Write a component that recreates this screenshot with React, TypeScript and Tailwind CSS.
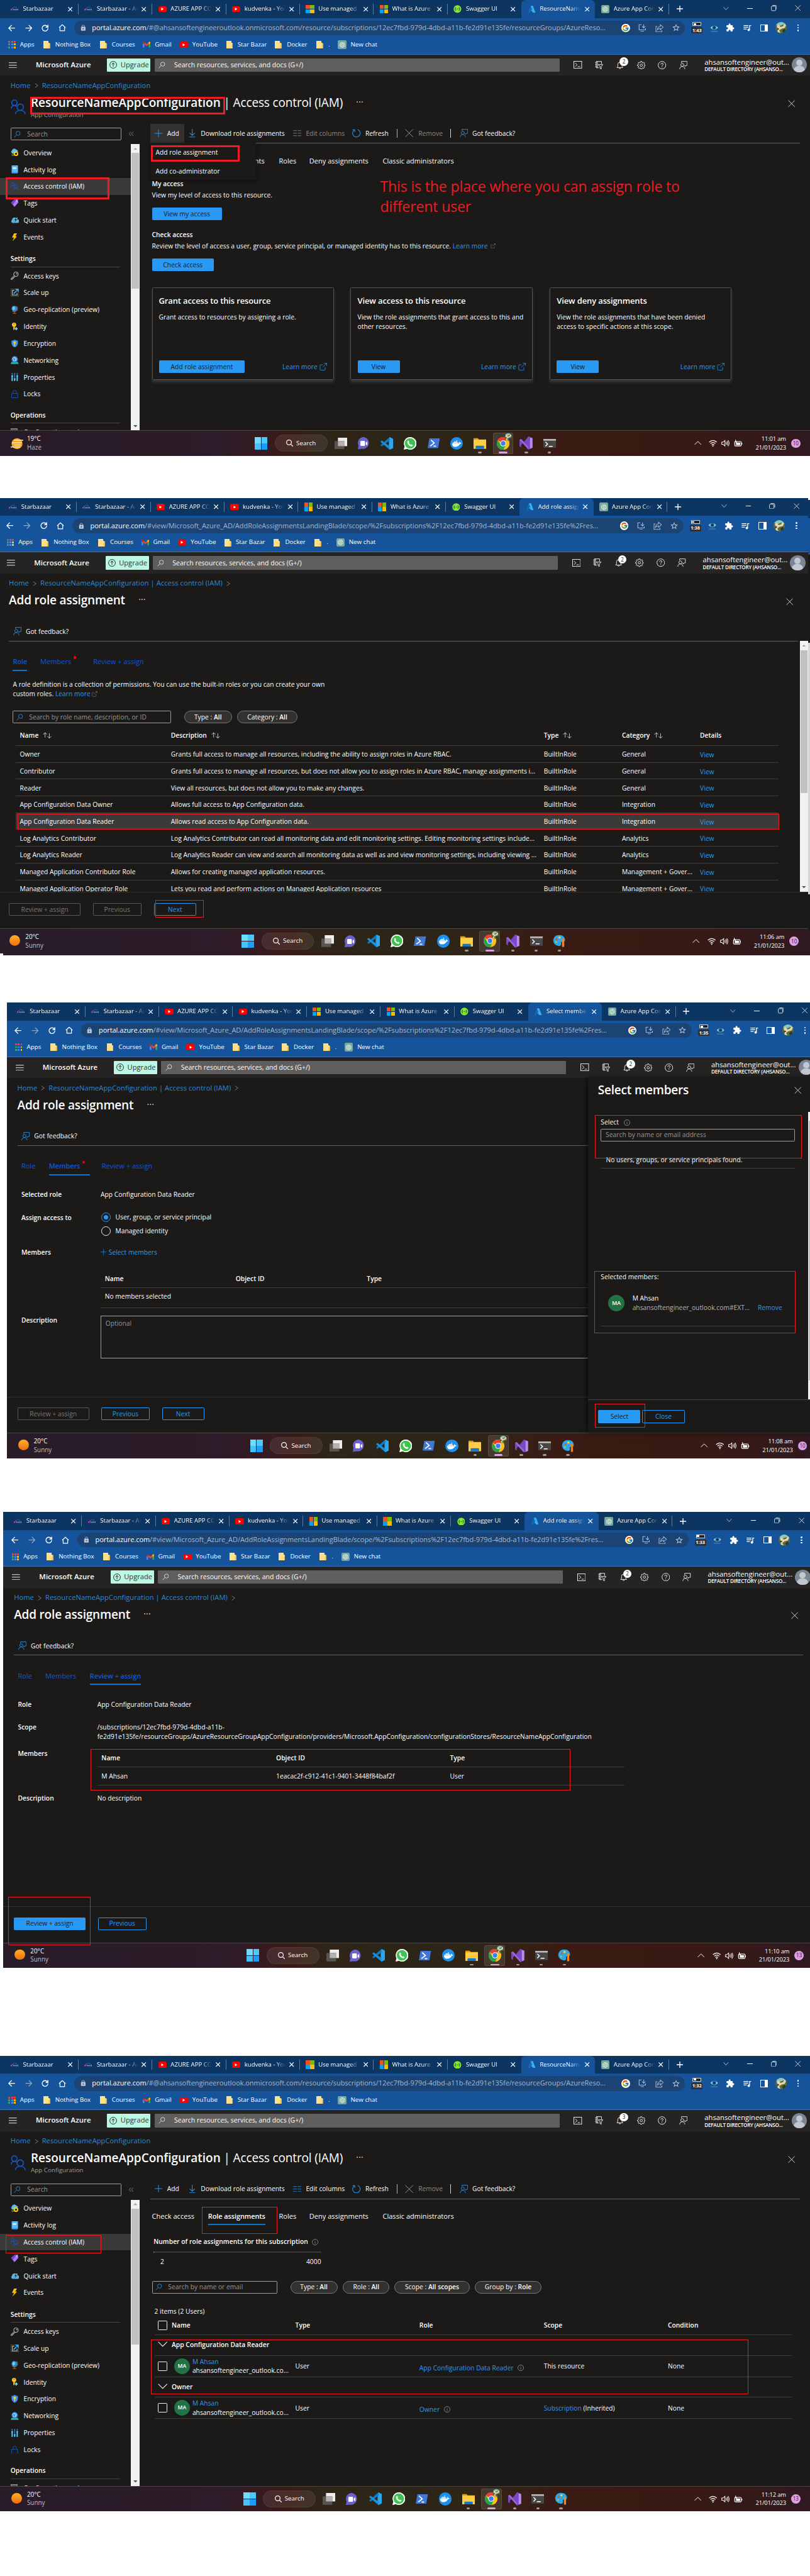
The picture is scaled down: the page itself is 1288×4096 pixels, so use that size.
import React from "react";
import {
  FaDocker,
} from "react-icons/fa";
import { FcGoogle } from "react-icons/fc";
import { MdExtension, MdLock, MdStarBorder, MdQueueMusic } from "react-icons/md";
import { RiOpenaiFill } from "react-icons/ri";

type Kids = { children?: React.ReactNode };

/* ---------- generic helpers ---------- */

function Svg({
  w = 20,
  h,
  vb = "0 0 20 20",
  c = "none",
  s = "none",
  sw = 1.3,
  children,
}: {
  w?: number;
  h?: number;
  vb?: string;
  c?: string;
  s?: string;
  sw?: number;
  children: React.ReactNode;
}) {
  return (
    <svg width={w} height={h ?? w} viewBox={vb} fill={c} stroke={s} strokeWidth={sw} className="block shrink-0">
      {children}
    </svg>
  );
}

const X = ({ w = 18, s = "#ffffff", sw = 1.4 }: { w?: number; s?: string; sw?: number }) => (
  <Svg w={w} s={s} sw={sw}>
    <path d="M1 1L19 19M19 1L1 19" />
  </Svg>
);

const Plus = ({ w = 20, s = "#2899f5", sw = 1.6 }: { w?: number; s?: string; sw?: number }) => (
  <Svg w={w} s={s} sw={sw}>
    <path d="M10 0V20M0 10H20" />
  </Svg>
);

const Lens = ({ w = 16, s = "#2899f5" }: { w?: number; s?: string }) => (
  <Svg w={w} s={s} sw={1.5}>
    <circle cx="12.5" cy="7.5" r="6" />
    <path d="M8 12L1 19.3" />
  </Svg>
);

const Feedback = ({ w = 20, s = "#2899f5" }: { w?: number; s?: string }) => (
  <Svg w={w} s={s} sw={1.3}>
    <path d="M5.5 4.5V1H19V10.5H16.5L13.6 13V10.5H12.6" />
    <circle cx="7.3" cy="9.2" r="3.6" />
    <path d="M1 19.5C1.3 15.6 3.8 13 7.3 13s6 2.600 6.300 6.500" />
  </Svg>
);

const People = ({ w = 20, sw = 1.3 }: { w?: number; sw?: number }) => (
  <Svg w={w} s="#0f5bd7" sw={sw} vb="0 0 19 19">
    <circle cx="4.600" cy="4.200" r="3.400" />
    <path d="M.6 11.500C.8 9 2.500 7.600 4.700 7.600c1.200 0 2.100.3 2.900.9" />
    <circle cx="12" cy="9.800" r="4" />
    <path d="M5.800 18.600C6.200 15.600 8.500 13.800 12 13.800s5.800 1.800 6.200 4.800" />
  </Svg>
);

const External = ({ w = 18, s = "#2899f5" }: { w?: number; s?: string }) => (
  <Svg w={w} s={s} sw={1.3}>
    <path d="M9 5H3Q1.500 5 1.500 6.500V17.500Q1.500 19 3 19H13.500Q15 19 15 17.500V11M12.500 1H19V7.500M19 1L8.500 11.500" />
  </Svg>
);

const Info = ({ w = 15 }: { w?: number }) => (
  <Svg w={w} s="#b5b3b1" sw={1.3}>
    <circle cx="10" cy="10" r="9" />
    <path d="M10 8.500V15M10 5V6.800" />
  </Svg>
);

const Sort = () => (
  <Svg w={21} h={16} s="#d8d6d4" sw={1.3} vb="0 0 21 16">
    <path d="M5.500 13V1.500M1 6L5.500 1.300L10 6M15.500 3V14.500M11 10L15.500 14.700L20 10" />
  </Svg>
);

/* ---------- favicons ---------- */

const StarFav = () => (
  <Svg w={20} h={12} vb="0 0 20 12">
    <path d="M5 5Q10-2 15 5" stroke="#3a5e96" strokeWidth="1.500" />
    <circle cx="1.800" cy="8" r="1.800" fill="#f236c8" />
    <circle cx="4" cy="5.500" r="1.300" fill="#8f3df0" />
    <path d="M6 8H19" stroke="#a9bbd6" strokeWidth="2.600" strokeDasharray="2 1.300" />
  </Svg>
);
const YtFav = () => (
  <div className="flex h-[14px] w-[20px] items-center justify-center rounded-[4px] bg-[#ff0000]">
    <Svg w={7} vb="0 0 10 10" c="#ffffff">
      <path d="M1 0L9 5L1 10Z" />
    </Svg>
  </div>
);
const MsFav = () => (
  <div className="grid grid-cols-2 gap-[1px]">
    <div className="size-[9.500px] bg-[#f25022]" />
    <div className="size-[9.500px] bg-[#7fba00]" />
    <div className="size-[9.500px] bg-[#00a4ef]" />
    <div className="size-[9.500px] bg-[#ffb900]" />
  </div>
);
const SwaggerFav = () => (
  <Svg w={19} s="#173647" sw={1.500}>
    <circle cx="10" cy="10" r="9.500" fill="#85ea2d" stroke="none" />
    <path d="M6.500 6Q5 6 5 8T3.800 10Q5 10 5 12T6.500 14M13.500 6Q15 6 15 8T16.200 10Q15 10 15 12T13.500 14" />
    <path d="M7 10H13" strokeDasharray="1.300 1.100" />
  </Svg>
);
const AzureFav = () => (
  <Svg w={20} vb="0 0 20 20">
    <path d="M7 2H12L6 18H1Z" fill="#1469b8" />
    <path d="M7.500 2H12.500L18.500 18H13L8 12.500L10.500 11Z" fill="#35b1f5" />
  </Svg>
);
const GptFav = () => (
  <div className="flex size-[20px] items-center justify-center rounded-[3px] bg-[#75a99b] text-[16px] text-white">
    <RiOpenaiFill />
  </div>
);
const Folder = () => (
  <Svg w={16} h={18} vb="0 0 16 18">
    <path d="M0 0H12V4L16 6V18H0Z" fill="#ffe08a" />
    <path d="M13 9L16 6V18H13Z" fill="#e9bd55" />
  </Svg>
);
const AppsGrid = () => (
  <div className="grid w-[17px] grid-cols-3 gap-[2px]">
    {["bg-[#ea4335]", "bg-[#ea4335]", "bg-[#ea4335]", "bg-[#34a853]", "bg-[#4285f4]", "bg-[#fbbc05]", "bg-[#34a853]", "bg-[#4285f4]", "bg-[#fbbc05]"].map((c, i) => (
      <div key={i} className={"size-[4.300px] " + c} />
    ))}
  </div>
);
const Gmail = () => (
  <Svg w={18} h={14} vb="0 0 18 14">
    <path d="M0 2V14H4V6Z" fill="#4285f4" />
    <path d="M18 2V14H14V6Z" fill="#34a853" />
    <path d="M0 1.500L2 .3L9 6L16 .3L18 1.500V4L9 10.800L0 4Z" fill="#ea4335" />
    <path d="M14 2L16 .3L18 1.500V4L14 7Z" fill="#fbbc05" />
    <path d="M0 1.500L2 .3L4 2V7L0 4Z" fill="#c5221f" />
  </Svg>
);
const Avatar = () => (
  <div className="size-[27px] overflow-hidden rounded-full">
    <Svg w={27} vb="0 0 27 27">
      <rect width="27" height="27" fill="#5b6b3d" />
      <path d="M0 0H27V9L19 6L11 9L0 7Z" fill="#8cc6c0" />
      <path d="M3 9L8 6L12 12L18 10L21 5L25 8L22 14L14 16L9 20L12 26L5 24L6 17Z" fill="#e6d6ad" />
      <path d="M2 18L7 14L9 18ZM16 20L22 16L26 22L18 26Z" fill="#2c3b22" />
    </Svg>
  </div>
);

/* ---------- browser chrome ---------- */

function Tab({ icon, title, active, sep = true }: { icon: React.ReactNode; title: string; active?: boolean; sep?: boolean }) {
  return (
    <div className={"flex h-[43px] w-[175px] shrink-0 items-center rounded-t-[10px] pl-[14.5px] " + (active ? "bg-[#15549a]" : "")}>
      <div className="flex w-[29.500px] shrink-0 items-center">{icon}</div>
      <div className="w-[100px] shrink-0 whitespace-nowrap [mask-image:linear-gradient(to_right,black_74%,transparent_97%)]">{title}</div>
      <div className="flex w-[24px] justify-center">
        <X w={11} sw={3.200} />
      </div>
      <div className={"ml-auto h-[25px] w-[1px] " + (sep && !active ? "bg-[#5f7a9c]" : "")} />
    </div>
  );
}

function Chrome({ activeTitle, host = "portal.azure.com", path, timer, fwd }: { activeTitle: string; host?: string; path: string; timer: string; fwd?: boolean }) {
  return (
    <div className="flex shrink-0 flex-col text-[14.300px] tracking-normal text-white">
      <div className="flex h-[43px] items-center bg-[#0d3561] pl-[10.500px]">
        <Tab icon={<StarFav />} title="Starbazaar" />
        <Tab icon={<StarFav />} title="Starbazaar - Ad" />
        <Tab icon={<YtFav />} title="AZURE APP CO" />
        <Tab icon={<YtFav />} title="kudvenka - You" />
        <Tab icon={<MsFav />} title="Use managed" />
        <Tab icon={<MsFav />} title="What is Azure" />
        <Tab icon={<SwaggerFav />} title="Swagger UI" sep={false} />
        <Tab icon={<AzureFav />} title={activeTitle} active />
        <Tab icon={<GptFav />} title="Azure App Con" />
        <div className="ml-[18px]">
          <Plus w={15} s="#fff" sw={2.700} />
        </div>
        <div className="mb-[4px] ml-auto flex items-center">
          <div className="flex w-[57px] justify-center">
            <Svg w={13} s="#fff" sw={1.500}><path d="M1 5L10 15L19 5" /></Svg>
          </div>
          <div className="flex w-[57px] justify-center"><div className="h-[1.500px] w-[13px] bg-white" /></div>
          <div className="flex w-[57px] justify-center">
            <Svg w={14} s="#fff" sw={1.700}>
              <rect x="1" y="4" width="15" height="15" rx="3" />
              <path d="M5 1.200H15Q19 1.200 19 5V15" />
            </Svg>
          </div>
          <div className="flex w-[57px] justify-center"><X w={14} sw={1.600} /></div>
        </div>
      </div>
      <div className="flex h-[49px] items-center bg-[#15549a] pb-[3px] pl-[7.500px]">
        <div className="flex w-[40px] justify-center">
          <Svg w={17} s="#fff" sw={2.200}><path d="M19 10H2M10 1.500L1.500 10L10 18.500" /></Svg>
        </div>
        <div className={"flex w-[40px] justify-center " + (fwd ? "" : "opacity-50")}>
          <Svg w={17} s="#fff" sw={2.200}><path d="M1 10H18M10 1.500L18.500 10L10 18.500" /></Svg>
        </div>
        <div className="flex w-[40px] justify-center">
          <Svg w={17} s="#fff" sw={2.300}><path d="M16.500 5.500A8 8 0 1 0 18 10M18 1V7.500H11.500" /></Svg>
        </div>
        <div className="flex w-[40px] justify-center">
          <Svg w={18} s="#fff" sw={2}><path d="M1.500 10L10 2L18.500 10M4 8.500V18H16V8.500" /></Svg>
        </div>
        <div className="ml-[8.500px] flex h-[35px] w-[1448px] items-center rounded-full bg-[#1b4474] pl-[13px]">
          <div className="w-[29px] text-[16px] text-[#b9c6d8]"><MdLock /></div>
          <div className="w-[1245px] whitespace-nowrap text-[16.400px] tracking-[-0.06px] text-[#a3b8d3]">
            <span className="text-white">{host}</span>
            {path}
          </div>
          <div className="flex w-[40px] justify-center">
            <div className="flex size-[20px] items-center justify-center rounded-full bg-white text-[17px]"><FcGoogle /></div>
          </div>
          <div className="flex w-[40px] justify-center">
            <Svg w={19} s="#a3b4cb" sw={1.800}><path d="M8 2H2V15H18V11M6 18.500H14M13.500 1V9.500M9.500 6L13.500 10L17.500 6" /></Svg>
          </div>
          <div className="flex w-[40px] justify-center">
            <Svg w={20} s="#a3b4cb" sw={1.600}><path d="M5 6H1.500V19H15.500V15M12 2L19 8L12 14V10.500Q8 10.500 5 14Q6 6.500 12 5.500Z" /></Svg>
          </div>
          <div className="flex w-[38px] justify-center text-[21px] text-[#b9c6d8]"><MdStarBorder /></div>
        </div>
        <div className="flex w-[56px] flex-col items-center">
          <div className="mb-[3px] flex h-[9px] w-[21px] items-center rounded-[1px] border-2 border-[#d5d5d5] bg-[#222] pl-[1px]"><div className="h-[4px] w-[6px] bg-white" /></div>
          <div className="flex h-[15px] w-[27px] items-center justify-center rounded-[2px] bg-[#2e3236] text-[11px] font-bold leading-none">{timer}</div>
        </div>
        <div className="flex w-[25px] justify-center">
          <Svg w={20} vb="0 0 20 20">
            <path d="M1 9Q10-1 19 9Q10 19 1 9Z" fill="#b5d3e0" />
            <circle cx="10" cy="9" r="4.800" fill="#1b6b8e" />
            <circle cx="10" cy="9" r="2" fill="#071a22" />
            <path d="M2 18H18" stroke="#5d8fbf" strokeWidth="1.500" />
          </Svg>
        </div>
        <div className="ml-[6px] flex w-[40px] justify-center text-[21px]"><MdExtension /></div>
        <div className="flex w-[40px] justify-center text-[24px]"><MdQueueMusic className="scale-x-[0.95]" /></div>
        <div className="flex w-[40px] justify-center"><div className="h-[17px] w-[19px] border-2 border-r-[8px] border-white" /></div>
        <div className="ml-[7px] flex w-[27px] justify-center"><Avatar /></div>
        <div className="ml-[25px] flex flex-col gap-[3px]">
          <div className="size-[3.500px] rounded-full bg-white" />
          <div className="size-[3.500px] rounded-full bg-white" />
          <div className="size-[3.500px] rounded-full bg-white" />
        </div>
      </div>
      <div className="flex h-[37px] items-center whitespace-nowrap border-b border-[#3f73b3] bg-[#15549a] pb-[8px] pl-[20px] text-[14.600px]">
        <div className="flex w-[83px] items-center gap-[10.500px]"><AppsGrid />Apps</div>
        <div className="flex w-[134px] items-center gap-[12px]"><Folder />Nothing Box</div>
        <div className="flex w-[102px] items-center gap-[12px]"><Folder />Courses</div>
        <div className="flex w-[87px] items-center gap-[10px]"><Gmail />Gmail</div>
        <div className="flex w-[110px] items-center gap-[10px]"><YtFav />YouTube</div>
        <div className="flex w-[116px] items-center gap-[11px]"><Folder />Star Bazar</div>
        <div className="flex w-[98px] items-center gap-[12px]"><Folder />Docker</div>
        <div className="flex w-[51px] items-center gap-[12px]"><Folder />.</div>
        <div className="flex items-center gap-[10px]"><GptFav />New chat</div>
      </div>
    </div>
  );
}

/* ---------- Azure top bar ---------- */

function TopBar({ count }: { count: string }) {
  return (
    <div className="flex h-[50px] shrink-0 items-center bg-[#252423] pl-[21px] text-white">
      <Svg w={19} h={14} s="#e8e8e8" sw={1.500} vb="0 0 19 14"><path d="M0 1H19M0 7H19M0 13H19" /></Svg>
      <div className="ml-[45px] w-[169px] whitespace-nowrap text-[17px] font-semibold">Microsoft Azure</div>
      <div className="flex h-[32px] w-[103px] items-center gap-[8px] rounded-[2px] bg-[#bbf7e2] pl-[6px] text-[16.600px] text-[#323130]">
        <Svg w={18} s="#1b1a19" sw={1.500}><circle cx="10" cy="10" r="9" /><path d="M10 15V5.500M6 9L10 5.200L14 9" /></Svg>
        Upgrade
      </div>
      <div className="ml-[9px] flex h-[32px] w-[960px] items-center gap-[21px] rounded-[2px] bg-[#605e5c] pl-[10px] text-[15.600px]">
        <Lens w={16} s="#f3f2f1" />
        Search resources, services, and docs (G+/)
      </div>
      <div className="ml-[19px] flex items-center">
        <div className="flex w-[50px] justify-center">
          <Svg w={20} h={18} s="#f3f2f1" sw={1.400} vb="0 0 20 18"><rect x=".7" y=".7" width="18.600" height="16.600" /><path d="M4 4.500L8.500 9L4 13.500M10 13.500H15.500" /></Svg>
        </div>
        <div className="flex w-[50px] justify-center">
          <Svg w={20} s="#f3f2f1" sw={1.400}><path d="M9 16H3V1H15.500V7M6 1V16M1 4H4M1 8.500H4M1 13H4M8 8.500H19L15 13V19L12 17V13Z" /></Svg>
        </div>
        <div className="relative flex w-[50px] justify-center">
          <Svg w={20} s="#f3f2f1" sw={1.400}><path d="M3 15.500H17L15 12.500V8A5 5 0 0 0 5 8V12.500ZM8 16Q8.500 18.500 10 18.500T12 16" /></Svg>
          <div className="absolute left-[24px] top-[-8px] flex size-[20px] items-center justify-center rounded-full bg-white text-[12px] leading-none text-[#1b1a19]">{count}</div>
        </div>
        <div className="flex w-[50px] justify-center">
          <Svg w={20} s="#f3f2f1" sw={1.400}>
            <circle cx="10" cy="10" r="2.800" />
            <path d="M8.600 1H11.400L12 3.600L13.700 4.400L16 3L18 5L16.500 7.200L17 8.600L19 9V11.400L16.800 12L16.200 13.500L17.500 15.500L15.500 17.700L13.300 16.400L11.900 17L11.400 19H8.600L8 16.800L6.600 16.300L4.500 17.600L2.500 15.600L3.800 13.400L3.200 12L1 11.400V9L3.200 8.300L3.800 6.800L2.500 4.800L4.500 2.600L6.600 4L8 3.400Z" />
          </Svg>
        </div>
        <div className="flex w-[50px] justify-center">
          <Svg w={20} s="#f3f2f1" sw={1.400}><circle cx="10" cy="10" r="9" /><path d="M7.300 8Q7.300 5.200 10 5.200T12.700 7.700Q12.700 9.200 11 10.200Q10 10.800 10 12.500M10 14V15.600" /></Svg>
        </div>
        <div className="flex w-[50px] justify-center"><Feedback s="#f3f2f1" /></div>
      </div>
      <div className="ml-[25px] w-[207px] whitespace-nowrap">
        <div className="text-[16.700px] leading-[20px]">ahsansoftengineer@out...</div>
        <div className="text-[12px] font-semibold leading-[15px] tracking-[-0.3px]">DEFAULT DIRECTORY (AHSANSO...</div>
      </div>
      <div className="size-[36px] shrink-0 overflow-hidden rounded-full bg-[#7b8594]">
        <Svg w={36} vb="0 0 36 36" c="#c3c8d0"><circle cx="18" cy="13" r="7.500" /><ellipse cx="18" cy="30" rx="13" ry="10" /></Svg>
      </div>
    </div>
  );
}

/* ---------- Windows task bar ---------- */

function App({ children, dot, active }: Kids & { dot?: boolean; active?: boolean }) {
  return (
    <div className="relative flex h-[50px] w-[55px] shrink-0 items-center justify-center">
      {active && <div className="absolute inset-x-[3px] inset-y-0 rounded-[5px] border border-white/10 bg-white/10" />}
      <div className="relative">{children}</div>
      {dot && <div className="absolute bottom-[1px] h-[4px] w-[8px] rounded-full bg-[#a39a97]" />}
      {active && <div className="absolute bottom-[1px] h-[4px] w-[20px] rounded-full bg-[#df9fe4]" />}
    </div>
  );
}

const ChromeLogo = () => (
  <Svg w={30} vb="-15 -15 30 30">
    <circle r="15" fill="#fbc116" />
    <path d="M0 0L-13 -7.500A15 15 0 0 1 13 -7.500L0 -6.500Z" fill="#ea3f33" />
    <path d="M-13 -7.500A15 15 0 0 0 1 14.950L6 3L-5 4Z" fill="#2ba24c" />
    <circle r="7" fill="#fff" />
    <circle r="5.500" fill="#3c7ef0" />
  </Svg>
);

function TaskBar({ temp, sky, haze, time, badge, paint }: { temp: string; sky: string; haze?: boolean; time: string; badge: string; paint?: boolean }) {
  return (
    <div className="flex h-[60px] shrink-0 items-center border-t border-[#484542] bg-[linear-gradient(90deg,#281c28_0%,#2d1c29_27%,#351b22_32%,#3b1c14_36%,#2f2418_39%,#2c2617_50%,#2f2517_58%,#3a1c14_68%,#391913_85%,#2f1920_100%)] text-white">
      <div className={"flex items-center pl-[25px] text-[14.700px] " + (paint ? "w-[576.500px]" : "w-[604px]")}>
        <div className="w-[39px]">
          {haze ? (
            <Svg w={30} h={28} vb="0 0 30 28">
              <circle cx="15" cy="14" r="13" fill="#f9a51a" />
              <path d="M8 6H30M3 12H26M8 17H24M0 22H22" stroke="#ffe9c4" strokeWidth="2.300" />
            </Svg>
          ) : (
            <div className="mb-[4px] ml-[2px] size-[25px] rounded-full bg-linear-to-b from-[#ffaf22] to-[#ee6c10]" />
          )}
        </div>
        <div className="leading-[20px]">
          <div>{temp}</div>
          <div className="text-[#c4bec2]">{sky}</div>
        </div>
      </div>
      <div className="grid w-[30px] grid-cols-2 gap-[1px]">
        <div className="h-[14.500px] bg-[#6fdcfc]" />
        <div className="h-[14.500px] bg-[#4bc8fb]" />
        <div className="h-[14.500px] bg-[#48c0fa]" />
        <div className="h-[14.500px] bg-[#1c9dfb]" />
      </div>
      <div className="ml-[17px] mr-[4px] flex h-[40px] w-[125px] items-center justify-center gap-[7px] rounded-full border border-white/5 bg-white/8 text-[14.600px]">
        <Svg w={17} s="#fff" sw={2.200}><circle cx="8" cy="8" r="6.800" /><path d="M13 13L19 19" /></Svg>
        Search
      </div>
      <App>
        <Svg w={30} h={28} vb="0 0 30 28">
          <rect x="8" width="22" height="20" fill="#ededeb" />
          <rect y="8" width="23" height="20" fill="#59544d" />
          <rect x="8" y="8" width="15" height="12" fill="#b3b2b0" />
        </Svg>
      </App>
      <App>
        <Svg w={29} vb="0 0 29 29">
          <path d="M15 0A14 14 0 1 1 9 27.500L0 29L1.500 20A14 14 0 0 1 15 0Z" fill="#6a63cf" />
          <rect x="6" y="9" width="11" height="12" rx="2" fill="#fff" />
          <path d="M19 13L22.500 10V20L19 17Z" fill="#fff" />
        </Svg>
      </App>
      <App>
        <Svg w={30} vb="0 0 30 30">
          <path d="M22 0L30 4V26L22 30L20 28V2Z" fill="#2aa7ee" />
          <path d="M22 0L0 19L3 22L22 8Z" fill="#0d7cc4" />
          <path d="M22 30L0 11L3 8L22 22Z" fill="#1b8fdc" />
        </Svg>
      </App>
      <App>
        <Svg w={30} vb="0 0 30 30">
          <path d="M15 0A15 15 0 1 1 8 28L0 30L2 22A15 15 0 0 1 15 0Z" fill="#fff" />
          <circle cx="15" cy="15" r="12.500" fill="#3ec351" />
          <path d="M9.500 9Q11 7 12.500 10T12 13.500Q13.500 17 17 18.500Q18 16.500 19 17.500T22 19.500Q20.500 22.500 17.500 22Q10 20 8.500 13Q8.300 10.500 9.500 9Z" fill="#fff" />
        </Svg>
      </App>
      <App>
        <Svg w={29} h={23} vb="0 0 29 23">
          <path d="M4 0H29L25 23H0Z" fill="#3f76d8" />
          <path d="M8 4L15.500 11L6 18.500M14 18.500H20" stroke="#fff" strokeWidth="2.600" />
        </Svg>
      </App>
      <App>
        <div className="flex size-[30px] items-center justify-center rounded-full bg-[#1d90ed] text-[22px] text-white"><FaDocker /></div>
      </App>
      <App dot>
        <Svg w={30} h={26} vb="0 0 30 26">
          <path d="M0 1H10L13 4H30V26H0Z" fill="#e2a00e" />
          <path d="M0 5H30V26H0Z" fill="#fdce45" />
          <path d="M5 26V21Q5 19 7 19H23Q25 19 25 21V26Z" fill="#1377c9" />
        </Svg>
      </App>
      <App active>
        <ChromeLogo />
        <div className="absolute right-[-6px] top-[-8px] scale-[0.65] [transform-origin:top_right]"><Avatar /></div>
      </App>
      <App dot>
        <Svg w={31} vb="0 0 31 31">
          <path d="M21 0L31 4V27L21 31Z" fill="#b98af0" />
          <path d="M21 0L14 9L4 20V26L0 23V8L4 6L21 24V31L25 29V2Z" fill="#7a48c4" />
          <path d="M0 8L4 6L21 24V31Z" fill="#9a63e0" />
        </Svg>
      </App>
      <App dot>
        <Svg w={30} h={22} vb="0 0 30 22">
          <rect width="30" height="22" rx="1" fill="#474747" />
          <rect width="30" height="4" fill="#b9b9b9" />
          <path d="M5 7L10 12L5 17M13 17.500H22" stroke="#fff" strokeWidth="2.200" />
        </Svg>
      </App>
      {paint && (
        <App dot>
          <Svg w={30} vb="0 0 30 30">
            <path d="M15 1Q29 1 29 14Q28 18 23 17Q18 17 20 22Q20 28 13 27Q1 24 1 13Q3 1 15 1Z" fill="#2fa8e8" />
            <circle cx="9" cy="11" r="2.600" fill="#f04a3c" />
            <circle cx="16" cy="7" r="2.600" fill="#fbd335" />
            <circle cx="8" cy="18" r="2.300" fill="#8ad446" />
            <path d="M23 9L27 12V29H22V13Z" fill="#e8892b" />
          </Svg>
        </App>
      )}
      <div className="ml-auto flex items-center pr-[23px]">
        <div className="mr-[18px]"><Svg w={17} s="#fff" sw={1.700}><path d="M1 14L10 5L19 14" /></Svg></div>
        <div className="mr-[10px]">
          <Svg w={20} s="#fff" sw={1.700}><path d="M1 7.500Q10-.5 19 7.500M4 11Q10 5.500 16 11M7 14.300Q10 11.500 13 14.300" /><circle cx="10" cy="16.800" r="1.500" fill="#fff" stroke="none" /></Svg>
        </div>
        <div className="mr-[10px]">
          <Svg w={20} s="#fff" sw={1.500}><path d="M1 7.500H4L8.500 3.500V16.500L4 12.500H1ZM11 7Q13 10 11 13M13.500 5Q17 10 13.500 15M16 3Q21 10 16 17" /></Svg>
        </div>
        <div className="mr-[21px]">
          <Svg w={20} s="#fff" sw={1.700}><path d="M4 2V7M1.500 7H6.500V10" /><rect x="2" y="6" width="15.500" height="10.500" rx="2" /><rect x="5" y="8.500" width="10" height="6" fill="#fff" stroke="none" /><path d="M19 9.500V13" /></Svg>
        </div>
        <div className="mr-[12px] w-[82px] whitespace-nowrap text-right text-[14px] leading-[20px] tracking-[-0.2px]">
          <div>{time}</div>
          <div>21/01/2023</div>
        </div>
        <div className="flex size-[22px] items-center justify-center rounded-full bg-[#df9fe4] text-[12px] leading-none text-[#2b1d2c]">{badge}</div>
      </div>
    </div>
  );
}

/* ---------- shared blade pieces ---------- */

const LINK = "text-[#2899f5]";

function Crumbs({ items, tail }: { items: string[]; tail?: boolean }) {
  return (
    <div className="flex h-[46px] shrink-0 items-center whitespace-nowrap pl-[25px] pt-[2px] text-[16.700px] text-[#2b88d8]">
      {items.map((t, i) => (
        <React.Fragment key={t}>
          {i > 0 && <Sep />}
          <span>{t}</span>
        </React.Fragment>
      ))}
      {tail && <Sep />}
    </div>
  );
}
const Sep = () => (
  <span className="mx-[9px]">
    <Svg w={9} h={12} s="#8a8886" sw={1.300} vb="0 0 9 12"><path d="M1 1L8 6L1 11" /></Svg>
  </span>
);

function Btn({ children, kind, className }: Kids & { kind: "fill" | "line" | "off"; className: string }) {
  const look =
    kind === "fill"
      ? "bg-[#2899f5] text-[#1b1a19] border-[#2899f5]"
      : kind === "line"
        ? "border-[#2899f5] text-[#2899f5] border-[1.500px]"
        : "border-[#5d5b59] text-[#797775]";
  return <div className={"flex h-[30px] shrink-0 items-center justify-center whitespace-nowrap rounded-[2px] border text-[15.300px] " + look + " " + className}>{children}</div>;
}

function Pill({ k, v, className }: { k: string; v: string; className: string }) {
  return (
    <div className={"flex h-[30px] shrink-0 items-center justify-center whitespace-pre rounded-full border border-[#797775] bg-[#323130] " + className}>
      {k} : <span className="font-semibold">{v}</span>
    </div>
  );
}

const Red = ({ className }: { className: string }) => <div className={"absolute border-[#ed1c24] " + className} />;

/* ---------- sidebar ---------- */

const menuIcons: Record<string, React.ReactNode> = {
  Overview: (
    <Svg w={19} vb="0 0 19 19">
      <path d="M4 12A4 4 0 0 1 3 5A5.500 5.500 0 0 1 13 3A4.500 4.500 0 0 1 17 8L10 12Z" fill="#5fc0e6" />
      <circle cx="12.500" cy="12.500" r="4" stroke="#ffc90f" strokeWidth="3" />
      <circle cx="5" cy="15.500" r="2" stroke="#5e9624" strokeWidth="1.600" />
    </Svg>
  ),
  "Activity log": (
    <Svg w={19} vb="0 0 19 19"><rect x="2" y="0" width="15" height="19" rx="1" fill="#329cf0" /><rect x="3.500" width="13.500" height="16" fill="#5fb8f5" /><rect x="5" y="5" width="8" height="3" fill="#fff" /></Svg>
  ),
  "Access control (IAM)": <People w={19} />,
  Tags: (
    <Svg w={19} vb="0 0 19 19"><path d="M1 8L10 0H17L18 8L9 18Z" fill="#a67af4" /><path d="M1 8L10 0H14L5 13Z" fill="#7a3fe0" /><circle cx="14.500" cy="4" r="1.200" fill="#fff" /></Svg>
  ),
  "Quick start": (
    <Svg w={20} h={15} vb="0 0 20 15"><path d="M4 14A4 4 0 0 1 3 7A6 6 0 0 1 12 2L16 1V6A4 4 0 0 1 17 14Z" fill="#5bb4dd" /><path d="M13 1L9 8H12L9 13L15 6H12Z" fill="#1b1a19" /></Svg>
  ),
  Events: (
    <Svg w={19} vb="0 0 19 19"><path d="M8 0H15L11 7H15L4 19L8 10H3Z" fill="#fdbb13" /></Svg>
  ),
  "Access keys": (
    <Svg w={19} s="#e8e6e4" sw={1.300} vb="0 0 19 19"><circle cx="12.500" cy="6" r="5.400" /><path d="M8.500 9.500L.7 16.500V18.300H4.200V15.800H6.500V13.500H8.800L10.500 11" /><circle cx="14" cy="4.800" r=".8" /></Svg>
  ),
  "Scale up": (
    <Svg w={19} vb="0 0 19 19"><rect x="1" y="1" width="17" height="17" stroke="#5e9624" strokeWidth="1.500" strokeDasharray="1.500 1" /><path d="M9 4H4V15H15V10" stroke="#a9a9a9" strokeWidth="2" /><path d="M7 12L14 5" stroke="#3ea2ee" strokeWidth="3" /><path d="M10 0H19V9Z" fill="#3ea2ee" /></Svg>
  ),
  "Geo-replication (preview)": (
    <Svg w={19} vb="0 0 19 19"><circle cx="8.500" cy="7" r="6.500" fill="#2b8fe0" /><path d="M5 3Q9 0 10 5T6 11Q3 8 5 3Z" fill="#5fd3f0" /><path d="M14 1Q19 8 13 13Q9 16 4 13M9 15V18M5 18.300H13" stroke="#c9691f" strokeWidth="1.500" /></Svg>
  ),
  Identity: (
    <Svg w={19} vb="0 0 19 19"><circle cx="8" cy="5" r="5" fill="#ffca1f" /><path d="M6 8H10V15L8 18L6 16Z" fill="#f4b312" /><circle cx="8" cy="3.200" r="1.200" fill="#6b4c00" /><path d="M13 10L17 14.500L13 18.500L10 14.500Z" fill="#6fd6ea" /></Svg>
  ),
  Encryption: (
    <Svg w={19} vb="0 0 19 19"><path d="M9.500 0Q13 2.500 17 2.500V9Q16.500 15 9.500 19Q2.500 15 2 9V2.500Q6 2.500 9.500 0Z" fill="#3b92ee" /><circle cx="9.500" cy="7" r="3" fill="#ffca1f" /><path d="M8.300 8H10.700V14L9.500 15.500L8.300 14Z" fill="#ffca1f" /></Svg>
  ),
  Networking: (
    <Svg w={19} vb="0 0 19 19"><path d="M2 14H17L19 19H0Z" fill="#2bb5a0" /><circle cx="9.500" cy="8" r="7.500" fill="#2d83da" /><path d="M5 5L9 3L14 6L12 11L7 12ZM9 3L12 11" stroke="#d9efff" strokeWidth="1.300" /></Svg>
  ),
  Properties: (
    <Svg w={19} vb="0 0 19 19"><path d="M3.500 0V19M9.500 0V19M15.500 0V19" stroke="#1b7fd6" strokeWidth="2.400" /><path d="M3.500 7V19M9.500 14V19M15.500 7V19" stroke="#48dcf5" strokeWidth="2.600" /><path d="M1.500 7H5.500M7.500 14H11.500M13.500 7H17.500" stroke="#9fe9f8" strokeWidth="1.500" /></Svg>
  ),
  Locks: (
    <Svg w={19} s="#0f5bd7" sw={1.300} vb="0 0 19 19"><rect x="2.500" y="8.500" width="14" height="10" /><path d="M5.500 8.500V5Q5.500 .8 9.500 .8T13.500 5V8.500" /></Svg>
  ),
};

function MenuItem({ name }: { name: string }) {
  return (
    <div className={"flex h-[40px] shrink-0 items-center whitespace-nowrap pl-[25px] " + (name === "Access control (IAM)" ? "bg-[#3b3a39]" : "")}>
      <div className="flex w-[31px] shrink-0">{menuIcons[name]}</div>
      <div className="pt-[1px]">{name}</div>
    </div>
  );
}

function Sidebar() {
  return (
    <div className="flex w-[331px] shrink-0 flex-col">
      <div className="flex h-[51px] shrink-0 items-start pl-[25px] pt-[12px]">
        <div className="flex h-[30px] w-[263px] items-center gap-[15px] rounded-[2px] border border-[#a19f9d] pl-[7px] text-[#979593]">
          <Lens />
          Search
        </div>
        <div className="ml-[18px] pt-[9px]"><Svg w={11} s="#a19f9d" sw={2}><path d="M9 1L1 10L9 19M19 1L11 10L19 19" /></Svg></div>
      </div>
      <div className="flex h-[678px]">
        <div className="flex w-[310px] flex-col overflow-hidden">
          {["Overview", "Activity log", "Access control (IAM)", "Tags", "Quick start", "Events"].map((n) => <MenuItem key={n} name={n} />)}
          <div className="mx-[25px] flex h-[51px] shrink-0 items-end border-b border-[#484644] pb-[7px] font-semibold">Settings</div>
          <div className="h-[1px] shrink-0" />
          {["Access keys", "Scale up", "Geo-replication (preview)", "Identity", "Encryption", "Networking", "Properties", "Locks"].map((n) => <MenuItem key={n} name={n} />)}
          <div className="mx-[25px] flex h-[50px] shrink-0 items-end border-b border-[#484644] pb-[7px] font-semibold">Operations</div>
          <div className="flex h-[40px] shrink-0 items-center pl-[25px] pt-[3px]">
            <div className="w-[31px]"><div className="h-[19px] w-[16px] border border-[#8a8886] bg-[#605e5c]" /></div>
            Configuration explorer
          </div>
        </div>
        <div className="flex w-[21px] flex-col items-center bg-[#f1f1f1]">
          <div className="flex h-[21px] items-center"><Svg w={10} h={5} vb="0 0 10 5" c="#a3a3a3"><path d="M5 0L10 5H0Z" /></Svg></div>
          <div className="h-[322px] w-[17px] bg-[#c1c1c1]" />
          <div className="mt-auto flex h-[21px] items-center"><Svg w={10} h={5} vb="0 0 10 5" c="#505050"><path d="M0 0H10L5 5Z" /></Svg></div>
        </div>
      </div>
    </div>
  );
}

/* ---------- access control blade ---------- */

function IamBlade({ children, menuOpen }: Kids & { menuOpen?: boolean }) {
  return (
    <div className="flex h-[841px] flex-col">
      <Crumbs items={["Home", "ResourceNameAppConfiguration"]} />
      <div className="flex h-[66px] shrink-0 pl-[25px]">
        <div className="w-[48px] pt-[11px]"><People w={36} sw={1.200} /></div>
        <div className="whitespace-nowrap">
          <div className="flex h-[36px] items-center text-[28.400px] tracking-[-0.25px]">
            <span className="font-semibold tracking-[-0.05px]">ResourceNameAppConfiguration</span>
            <span className="whitespace-pre"> | Access control (IAM)</span>
            <span className="ml-[32px] text-[18px] tracking-[1px]">···</span>
          </div>
          <div className="flex h-[24px] items-center text-[14.600px] text-[#a19f9d]">App Configuration</div>
        </div>
        <div className="ml-auto mr-[36px] pt-[12px]"><X w={17} s="#e8e8e8" sw={1.500} /></div>
      </div>
      <div className="flex h-[729px]">
        <Sidebar />
        <div className="relative ml-[25px] flex w-[1540px] flex-col">
          <div className="flex h-[49px] shrink-0 items-end whitespace-nowrap border-b border-[#605e5c]">
            <div className={"flex h-[45px] w-[80px] items-center pl-[11px] " + (menuOpen ? "bg-[#323130]" : "")}>
              <div className="w-[29px]"><Plus w={18} /></div>Add
            </div>
            <div className="flex h-[45px] w-[258px] items-center pl-[13px]">
              <div className="w-[27px]"><Svg w={14} h={20} s="#2899f5" sw={1.500} vb="0 0 14 20"><path d="M7 0V15M1 9.500L7 15.500L13 9.500M0 19H14" /></Svg></div>
              Download role assignments
            </div>
            <div className={"flex h-[45px] w-[141px] items-center " + (menuOpen ? "text-[#8a8886]" : "")}>
              <div className="w-[31px]"><Svg w={20} h={14} s={menuOpen ? "#797775" : "#2b7ac9"} sw={1.500} vb="0 0 20 14"><path d="M0 1H9M11 1H20M0 7H9M11 7H20M0 13H9M11 13H20" /></Svg></div>
              Edit columns
            </div>
            <div className="flex h-[45px] w-[105px] items-center">
              <div className="w-[31px]"><Svg w={20} s="#2899f5" sw={1.500}><path d="M5 2.500A9 9 0 1 0 13 1.500M1 2H6V7" /></Svg></div>
              Refresh
            </div>
            <div className="mb-[12px] h-[21px] w-[1.500px] bg-[#b5b3b1]" />
            <div className="flex h-[45px] w-[126.500px] items-center pl-[19px] text-[#8a8886]">
              <div className="w-[31px]"><X w={20} s="#a19f9d" /></div>Remove
            </div>
            <div className="mb-[12px] h-[21px] w-[1.500px] bg-[#d8d6d4]" />
            <div className="flex h-[45px] items-center pl-[20px]">
              <div className="w-[30px]"><Feedback /></div>Got feedback?
            </div>
          </div>
          <div className="flex h-[84px] shrink-0 items-center whitespace-nowrap pl-[4px] text-[16.400px]">
            <div className="w-[133px]">Check access</div>
            <div className="flex w-[168px]">
              <div className={menuOpen ? "" : "border-b-[3px] border-[#0078d4] pb-[6px] pt-[9px] font-semibold tracking-[-0.15px]"}>Role assignments</div>
            </div>
            <div className="w-[72px]">Roles</div>
            <div className="w-[174px]">Deny assignments</div>
            <div>Classic administrators</div>
          </div>
          {children}
        </div>
      </div>
    </div>
  );
}

function Card({ title, text, btn, btnW, className }: { title: string; text: string; btn: string; btnW: string; className: string }) {
  return (
    <div className={"flex h-[219px] w-[431px] flex-col rounded-[2px] border border-[#55534f] px-[15px] pb-[15px] pt-[17px] shadow-[0_5px_7px_rgba(255,255,255,0.13)] " + className}>
      <div className="h-[26px] text-[19.400px] font-semibold leading-[26px] tracking-[-0.2px]">{title}</div>
      <div className="mt-[15px]">{text}</div>
      <div className="mt-auto flex items-center justify-between">
        <Btn kind="fill" className={btnW}>{btn}</Btn>
        <div className={"flex items-center gap-[4px] " + LINK}>Learn more <External /></div>
      </div>
    </div>
  );
}

function AccessOverview() {
  return (
    <>
      <div className="flex flex-col pl-[4px]">
        <div className="h-[24px] font-semibold leading-[24px]">My access</div>
        <div className="flex h-[29px] items-center">View my level of access to this resource.</div>
        <Btn kind="fill" className="mt-[15px] w-[166px]">View my access</Btn>
        <div className="mt-[22px] h-[24px] font-semibold leading-[24px]">Check access</div>
        <div className="flex h-[30px] items-center whitespace-pre">
          Review the level of access a user, group, service principal, or managed identity has to this resource. <span className={LINK}>Learn more</span>
          <span className="ml-[6px]"><External w={12} s="#8a8886" /></span>
        </div>
        <Btn kind="fill" className="mt-[15px] w-[147px]">Check access</Btn>
        <div className="mt-[39px] flex">
          <Card title="Grant access to this resource" text="Grant access to resources by assigning a role." btn="Add role assignment" btnW="w-[204px]" className="mr-[40px]" />
          <Card title="View access to this resource" text="View the role assignments that grant access to this and other resources." btn="View" btnW="w-[100px]" className="mr-[41px]" />
          <Card title="View deny assignments" text="View the role assignments that have been denied access to specific actions at this scope." btn="View" btnW="w-[100px]" className="" />
        </div>
      </div>
      <div className="absolute left-0 top-[48px] flex h-[88px] w-[250px] flex-col whitespace-nowrap bg-[#1b1a19] pl-[13px] shadow-[0_3px_8px_rgba(0,0,0,0.5)]">
        <div className="flex h-[46px] items-center">Add role assignment</div>
        <div className="flex h-[42px] items-center">Add co-administrator</div>
      </div>
      <div className="absolute left-[545px] top-[126px] w-[760px] text-[34.500px] leading-[48.500px] tracking-[-0.25px] text-[#ed1c24]">
        This is the place where you can assign role to different user
      </div>
    </>
  );
}

const Box = () => <div className="size-[22px] rounded-[2px] border-[1.500px] border-[#f3f2f1]" />;
const Down = () => <Svg w={23} h={13} s="#f3f2f1" sw={1.500} vb="0 0 23 13"><path d="M1 1L11.500 11.500L22 1" /></Svg>;
const Face = ({ className }: { className: string }) => (
  <div className={"flex shrink-0 items-center justify-center rounded-full bg-[#217346] text-[13px] font-semibold text-white " + className}>MA</div>
);

function Assignment({ role, scope }: { role: string; scope: React.ReactNode }) {
  return (
    <div className="flex h-[50px] items-center border-b border-[#3f3d3c] pl-[8px]">
      <div className="w-[39px]"><Box /></div>
      <div className="w-[43px]"><Face className="size-[37px]" /></div>
      <div className="w-[244px]">
        <div className={LINK}>M Ahsan</div>
        <div>ahsansoftengineer_outlook.co...</div>
      </div>
      <div className="w-[294px] pt-[1px]">User</div>
      <div className={"flex w-[295px] items-center gap-[10px] pt-[8px] " + LINK}>{role}<Info /></div>
      <div className="w-[294px] pt-[1px]">{scope}</div>
      <div className="pt-[1px]">None</div>
    </div>
  );
}

function RoleAssignments() {
  return (
    <div className="flex flex-col whitespace-nowrap">
      <div className="flex h-[33px] items-center gap-[9px] pl-[8px] pt-[2px] font-semibold tracking-[0.09px]">
        Number of role assignments for this subscription <Info />
      </div>
      <div className="ml-[7px] mt-[7px] flex h-[3px] w-[398px] bg-[#3b3a39]"><div className="w-[1.500px] bg-[#2899f5]" /></div>
      <div className="ml-[24px] flex h-[41px] w-[381px] items-center justify-between pt-[2px]"><span>2</span><span>4000</span></div>
      <div className="ml-[4px] mt-[26px] flex">
        <div className="flex h-[30px] w-[297px] items-center gap-[14px] rounded-[2px] border border-[#a19f9d] pl-[7px] text-[#979593]"><Lens />Search by name or email</div>
        <Pill k="Type" v="All" className="ml-[31px] w-[112px]" />
        <Pill k="Role" v="All" className="ml-[13px] w-[110px]" />
        <Pill k="Scope" v="All scopes" className="ml-[12px] w-[178px]" />
        <Pill k="Group by" v="Role" className="ml-[12px] w-[159px]" />
      </div>
      <div className="mt-[31px] h-[24px] pl-[10px]">2 items (2 Users)</div>
      <div className="ml-[10px] w-[1510px]">
        <div className="flex h-[43px] items-center border-b border-[#3f3d3c] pb-[1px] pl-[8px] font-semibold">
          <div className="w-[33px]"><Box /></div>
          <div className="w-[293px]">Name</div>
          <div className="w-[294px]">Type</div>
          <div className="w-[295px]">Role</div>
          <div className="w-[294px]">Scope</div>
          <div>Condition</div>
        </div>
        <div className="flex h-[50px] items-center border-b border-[#3f3d3c] pb-[3px] pl-[8px] font-semibold"><div className="w-[33px]"><Down /></div><div className="pt-[2px]">App Configuration Data Reader</div></div>
        <Assignment role="App Configuration Data Reader" scope="This resource" />
        <div className="flex h-[49px] items-center border-b border-[#3f3d3c] pb-[3px] pl-[8px] font-semibold"><div className="w-[33px]"><Down /></div><div className="pt-[2px]">Owner</div></div>
        <Assignment role="Owner" scope={<><span className={LINK}>Subscription</span> (Inherited)</>} />
      </div>
    </div>
  );
}

/* ---------- add role assignment blade ---------- */

type Step = { name: string; width: string; dot?: boolean };

function Wizard({ steps, active, children, footer, close = true }: Kids & { steps: Step[]; active: string; footer: React.ReactNode; close?: boolean }) {
  return (
    <div className="flex h-[841px] flex-col whitespace-nowrap">
      <Crumbs items={["Home", "ResourceNameAppConfiguration | Access control (IAM)"]} tail />
      <div className="flex h-[66px] shrink-0 pl-[25px]">
        <div className="flex h-[36px] items-center text-[28.400px] font-semibold tracking-[-0.3px]">
          Add role assignment
          <span className="ml-[32px] text-[18px] font-normal tracking-[1px]">···</span>
        </div>
        {close && <div className="ml-auto mr-[36px] pt-[12px]"><X w={17} s="#e8e8e8" sw={1.500} /></div>}
      </div>
      <div className="ml-[25px] mr-[25px] flex h-[49px] shrink-0 items-center gap-[10px] border-b border-[#605e5c] pl-[10px] pt-[4px]">
        <Feedback />
        Got feedback?
      </div>
      <div className="flex h-[594px] shrink-0 flex-col overflow-hidden">
        <div className="flex h-[70px] shrink-0 pl-[34.500px] text-[16.400px] text-[#0f57d8]">
          {steps.map((s) => (
            <div key={s.name} className={"flex shrink-0 " + s.width}>
              <div className={"flex items-end border-b-[3px] pb-[7px] leading-[24px] " + (s.name === active ? "border-[#0078d4] font-semibold tracking-[-0.15px]" : "border-transparent")}>
                {s.name}
                {s.dot && <div className="mb-[18px] ml-[5px] mr-[12px] size-[7px] rounded-full bg-[#ff0000]" />}
              </div>
            </div>
          ))}
        </div>
        {children}
      </div>
      <div className="flex h-[86px] shrink-0 items-start border-t border-[#323130] pl-[25px] pt-[25px]">{footer}</div>
    </div>
  );
}

const ROLES: string[][] = [
  ["Owner", "Grants full access to manage all resources, including the ability to assign roles in Azure RBAC.", "General"],
  ["Contributor", "Grants full access to manage all resources, but does not allow you to assign roles in Azure RBAC, manage assignments i...", "General"],
  ["Reader", "View all resources, but does not allow you to make any changes.", "General"],
  ["App Configuration Data Owner", "Allows full access to App Configuration data.", "Integration"],
  ["App Configuration Data Reader", "Allows read access to App Configuration data.", "Integration"],
  ["Log Analytics Contributor", "Log Analytics Contributor can read all monitoring data and edit monitoring settings. Editing monitoring settings include...", "Analytics"],
  ["Log Analytics Reader", "Log Analytics Reader can view and search all monitoring data as well as and view monitoring settings, including viewing ...", "Analytics"],
  ["Managed Application Contributor Role", "Allows for creating managed application resources.", "Management + Gover..."],
  ["Managed Application Operator Role", "Lets you read and perform actions on Managed Application resources", "Management + Gover..."],
];

function RoleStep() {
  return (
    <Wizard
      active="Role"
      steps={[
        { name: "Role", width: "w-[65px]" },
        { name: "Members", width: "w-[125.500px]", dot: true },
        { name: "Review + assign", width: "w-[140px]" },
      ]}
      footer={
        <>
          <Btn kind="off" className="w-[170px]">Review + assign</Btn>
          <Btn kind="off" className="ml-[29px] w-[115px]">Previous</Btn>
          <Btn kind="line" className="ml-[30px] w-[100px]">Next</Btn>
        </>
      }
    >
      <div className="mt-[22px] pl-[34.500px]">
        A role definition is a collection of permissions. You can use the built-in roles or you can create your own
        <div className="flex items-center whitespace-pre">custom roles. <span className={LINK}>Learn more</span><span className="ml-[4px]"><External w={13} s="#8a8886" /></span></div>
      </div>
      <div className="mt-[29px] flex shrink-0 pl-[34.500px]">
        <div className="flex h-[30px] w-[375px] items-center gap-[14px] rounded-[2px] border border-[#a19f9d] pl-[7px] text-[#979593]"><Lens />Search by role name, description, or ID</div>
        <Pill k="Type" v="All" className="ml-[31px] w-[113px]" />
        <Pill k="Category" v="All" className="ml-[12px] w-[144px]" />
      </div>
      <div className="ml-[41px] w-[1808px] shrink-0">
        <div className="flex h-[53px] items-center border-b border-[#3f3d3c] pl-[10px] pt-[6px] font-semibold">
          <div className="flex w-[358px] items-center gap-[10px]">Name <Sort /></div>
          <div className="flex w-[884px] items-center gap-[10px]">Description <Sort /></div>
          <div className="flex w-[185px] items-center gap-[10px]">Type <Sort /></div>
          <div className="flex w-[185px] items-center gap-[10px]">Category <Sort /></div>
          <div>Details</div>
        </div>
        {ROLES.map((r) => (
          <div key={r[0]} className={"flex h-[39.800px] items-center border-b border-[#3f3d3c] pl-[10px] pt-[2px] " + (r[0] === "App Configuration Data Reader" ? "bg-[#3b3a39]" : "")}>
            <div className="w-[358px]">{r[0]}</div>
            <div className="w-[884px]">{r[1]}</div>
            <div className="w-[185px]">BuiltInRole</div>
            <div className="w-[185px]">{r[2]}</div>
            <div className={"pt-[2px] " + LINK}>View</div>
          </div>
        ))}
      </div>
    </Wizard>
  );
}

const Label = ({ children }: Kids) => <div className="w-[188px] shrink-0 font-semibold">{children}</div>;

function MembersStep() {
  return (
    <Wizard
      active="Members"
      close={false}
      steps={[
        { name: "Role", width: "w-[65.500px]" },
        { name: "Members", width: "w-[125px]", dot: true },
        { name: "Review + assign", width: "w-[140px]" },
      ]}
      footer={
        <>
          <Btn kind="off" className="w-[170px]">Review + assign</Btn>
          <Btn kind="line" className="ml-[29px] w-[115px]">Previous</Btn>
          <Btn kind="line" className="ml-[29px] w-[100px]">Next</Btn>
        </>
      }
    >
      <div className="flex flex-col pl-[34.500px]">
        <div className="mt-[35px] flex h-[22px] items-center"><Label>Selected role</Label>App Configuration Data Reader</div>
        <div className="mt-[28px] flex">
          <div className="pt-[4px]"><Label>Assign access to</Label></div>
          <div>
            <div className="flex h-[28px] items-center gap-[11px]">
              <div className="ml-[2px] flex size-[22px] items-center justify-center rounded-full border-[1.500px] border-[#2899f5]"><div className="size-[10px] rounded-full bg-[#2899f5]" /></div>
              User, group, or service principal
            </div>
            <div className="mt-[5px] flex h-[28px] items-center gap-[11px]">
              <div className="ml-[2px] size-[22px] rounded-full border-[1.500px] border-[#f3f2f1]" />
              Managed identity
            </div>
          </div>
        </div>
        <div className="mt-[25px] flex h-[22px] items-center">
          <Label>Members</Label>
          <div className={"flex items-center gap-[5px] " + LINK}><Plus w={14} sw={1.500} />Select members</div>
        </div>
        <div className="ml-[188px] mt-[31px]">
          <div className="flex h-[43px] items-center border-b border-[#3f3d3c] pl-[10px] pt-[2px] font-semibold"><div className="w-[310px]">Name</div><div className="w-[311px]">Object ID</div><div>Type</div></div>
          <div className="flex h-[47px] items-center border-b border-[#3f3d3c] pb-[7px] pl-[10px]">No members selected</div>
        </div>
        <div className="mt-[19px] flex">
          <Label>Description</Label>
          <div className="h-[101px] flex-1 border border-[#a19f9d] pl-[10px] pt-[5px] text-[#979593]">Optional</div>
        </div>
      </div>
    </Wizard>
  );
}

function SelectMembers() {
  return (
    <div className="absolute left-[1377px] top-[179px] flex h-[841px] w-[543px] flex-col whitespace-nowrap bg-[#1b1a19] shadow-[-4px_0_12px_rgba(0,0,0,0.55)]">
      <div className="flex h-[80px] shrink-0 items-center pb-[22px] pl-[24px] text-[28.400px] font-semibold tracking-[-0.3px]">
        Select members
        <div className="ml-auto mr-[36px]"><X w={17} s="#e8e8e8" sw={1.500} /></div>
      </div>
      <div className="flex h-[681px] shrink-0">
        <div className="flex w-[522px] flex-col pl-[31px]">
          <div className="flex h-[40px] shrink-0 items-center gap-[12px] pt-[11px]">Select <Info /></div>
          <div className="flex h-[30px] w-[460px] shrink-0 items-center rounded-[2px] border border-[#a19f9d] pl-[10px] text-[#979593]">Search by name or email address</div>
          <div className="flex h-[64px] w-[460px] shrink-0 items-end border-b border-[#3f3d3c] pb-[7px] pl-[12px]">No users, groups, or service principals found.</div>
          <div className="mt-[246px]">Selected members:</div>
          <div className="mt-[16px] flex h-[90px] w-[460px] shrink-0 items-center border-b border-[#3f3d3c] pb-[17px] pl-[18px]">
            <Face className="size-[38px]" />
            <div className="ml-[19px] w-[297px]">
              <div>M Ahsan</div>
              <div className="text-[#b5b3b1]">ahsansoftengineer_outlook.com#EXT...</div>
            </div>
            <div className={"pt-[20px] " + LINK}>Remove</div>
          </div>
        </div>
        <div className="w-[21px] bg-[#f1f1f1] pt-[21px]"><div className="ml-[2px] h-[616px] w-[17px] bg-[#c1c1c1]" /></div>
      </div>
      <div className="flex shrink-0 border-t border-[#484644] pl-[25px] pt-[25px]">
        <Btn kind="fill" className="w-[100px]">Select</Btn>
        <Btn kind="line" className="ml-[4px] w-[101px]">Close</Btn>
      </div>
    </div>
  );
}

function ReviewStep() {
  return (
    <Wizard
      active="Review + assign"
      steps={[
        { name: "Role", width: "w-[65px]" },
        { name: "Members", width: "w-[105.500px]" },
        { name: "Review + assign", width: "w-[140px]" },
      ]}
      footer={
        <>
          <Btn kind="fill" className="w-[170px]">Review + assign</Btn>
          <Btn kind="line" className="ml-[29px] w-[115px]">Previous</Btn>
        </>
      }
    >
      <div className="flex flex-col pl-[34.500px]">
        <div className="mt-[35px] flex h-[22px] items-center"><Label>Role</Label>App Configuration Data Reader</div>
        <div className="mt-[32px] flex">
          <Label>Scope</Label>
          <div>
            /subscriptions/12ec7fbd-979d-4dbd-a11b-
            <br />
            fe2d91e135fe/resourceGroups/AzureResourceGroupAppConfiguration/providers/Microsoft.AppConfiguration/configurationStores/ResourceNameAppConfiguration
          </div>
        </div>
        <div className="mt-[18px] flex">
          <Label>Members</Label>
          <div className="w-[1249px]">
            <div className="flex h-[44px] items-center border-b border-[#3f3d3c] pl-[10px] pt-[1px] font-semibold"><div className="w-[414px]">Name</div><div className="w-[412px]">Object ID</div><div>Type</div></div>
            <div className="flex h-[43px] items-center border-b border-[#3f3d3c] pl-[10px] pt-[2px]"><div className="w-[414px]">M Ahsan</div><div className="w-[412px]">1eacac2f-c912-41c1-9401-3448f84baf2f</div><div>User</div></div>
          </div>
        </div>
        <div className="mt-[20px] flex"><Label>Description</Label>No description</div>
      </div>
    </Wizard>
  );
}

/* ---------- page ---------- */

function Desktop({ children, className = "" }: Kids & { className?: string }) {
  return <div className={"relative flex h-[1080px] w-[1920px] shrink-0 flex-col overflow-hidden bg-[#1b1a19] text-[15.300px] leading-[22px] tracking-[0.05px] text-white " + className}>{children}</div>;
}

const IAM_PATH = "/#@ahsansoftengineeroutlook.onmicrosoft.com/resource/subscriptions/12ec7fbd-979d-4dbd-a11b-fe2d91e135fe/resourceGroups/AzureReso...";
const ADD_PATH = "/#view/Microsoft_Azure_AD/AddRoleAssignmentsLandingBlade/scope/%2Fsubscriptions%2F12ec7fbd-979d-4dbd-a11b-fe2d91e135fe%2Fres...";

export default function Page() {
  return (
    <div className="h-[4096px] w-[1288px] overflow-hidden bg-white">
      <div className="flex h-[6105px] w-[1920px] flex-col overflow-hidden font-['Open_Sans',sans-serif] [zoom:0.67090]">
        <Desktop>
          <Chrome activeTitle="ResourceName" path={IAM_PATH} timer="1:43" fwd />
          <TopBar count="2" />
          <IamBlade menuOpen><AccessOverview /></IamBlade>
          <TaskBar temp="19°C" sky="Haze" haze time="11:01 am" badge="10" />
          <Red className="left-[71px] top-[229px] h-[42px] w-[462px] border-[5px]" />
          <Red className="left-[14px] top-[420px] h-[52px] w-[246px] border-[5px]" />
          <Red className="left-[358px] top-[345px] h-[38px] w-[210px] border-[5px]" />
        </Desktop>

        <div className="mt-[100px] flex">
          <Desktop className="-ml-[4px]">
            <Chrome activeTitle="Add role assign" path={ADD_PATH} timer="1:38" />
            <TopBar count="2" />
            <RoleStep />
            <TaskBar temp="20°C" sky="Sunny" time="11:06 am" badge="10" paint />
            <div className="absolute left-[1900px] top-[339px] flex h-[595px] w-[20px] flex-col items-center bg-[#f1f1f1]">
              <div className="flex h-[22px] items-center"><Svg w={10} h={5} vb="0 0 10 5" c="#a3a3a3"><path d="M5 0L10 5H0Z" /></Svg></div>
              <div className="h-[339px] w-[17px] bg-[#c1c1c1]" />
              <div className="mt-auto flex h-[22px] items-center"><Svg w={10} h={5} vb="0 0 10 5" c="#505050"><path d="M0 0H10L5 5Z" /></Svg></div>
            </div>
            <Red className="left-[45px] top-[749px] h-[37px] w-[1806px] border" />
            <Red className="left-[372px] top-[953px] h-[41px] w-[115px] border" />
          </Desktop>
          <div className="flex w-[4px] flex-col pt-[5px]">
            <div className="h-[43px] bg-[#0d3561]" />
            <div className="h-[86px] bg-[#15549a]" />
            <div className="h-[210px] bg-[#1b1a19]" />
            <div className="h-[595px] bg-[#d5d5d5]" />
            <div className="h-[86px] bg-[#1b1a19]" />
            <div className="h-[55px] bg-[#2f1920]" />
          </div>
        </div>
        <div className="ml-[8px] h-[4px] shrink-0 bg-[linear-gradient(90deg,#281c28_0%,#2d1c29_30%,#3b1c14_36%,#2c2617_45%,#2f2517_58%,#3a1c14_68%,#2f1920_100%)]" />

        <Desktop className="ml-[16px] mt-[112px]">
          <Chrome activeTitle="Select member" path={ADD_PATH} timer="1:35" />
          <TopBar count="2" />
          <MembersStep />
          <TaskBar temp="20°C" sky="Sunny" time="11:08 am" badge="10" paint />
          <SelectMembers />
          <Red className="left-[1394px] top-[267px] h-[103px] w-[491px] border" />
          <Red className="left-[1393px] top-[637px] h-[147px] w-[476px] border" />
          <Red className="left-[1394px] top-[951px] h-[57px] w-[119px] border" />
        </Desktop>

        <Desktop className="ml-[8px] mt-[128px]">
          <Chrome activeTitle="Add role assign" path={ADD_PATH} timer="1:33" />
          <TopBar count="2" />
          <ReviewStep />
          <TaskBar temp="20°C" sky="Sunny" time="11:10 am" badge="13" paint />
          <Red className="left-[207px] top-[561px] h-[99px] w-[1137px] border" />
          <Red className="left-[11px] top-[911px] h-[115px] w-[195px] border" />
        </Desktop>

        <Desktop className="mt-[208px]">
          <Chrome activeTitle="ResourceName" path={IAM_PATH} timer="1:32" />
          <TopBar count="3" />
          <IamBlade><RoleAssignments /></IamBlade>
          <TaskBar temp="20°C" sky="Sunny" time="11:12 am" badge="13" paint />
          <Red className="left-[13px] top-[425px] h-[43px] w-[227px] border" />
          <Red className="left-[479px] top-[359px] h-[63px] w-[179px] border" />
          <Red className="left-[357px] top-[673px] h-[129px] w-[1417px] border" />
        </Desktop>
      </div>
    </div>
  );
}
